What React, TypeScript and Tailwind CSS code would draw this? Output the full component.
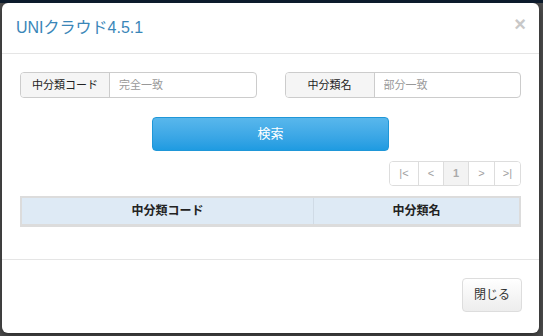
const font = "font-['Liberation_Sans','Noto_Sans_CJK_JP',sans-serif]";

function InputGroup({ label, placeholder }: { label: string; placeholder: string }) {
    return (
        <div className="flex h-[26px] rounded-[4px] border border-[#cccccc] overflow-hidden bg-white">
            <div className="w-[89px] shrink-0 flex items-center justify-center bg-[#f5f5f5] border-r border-[#cccccc] text-[11px] text-[#222]">
                {label}
            </div>
            <input
                className="flex-1 min-w-0 px-[9px] text-[11px] text-[#333] placeholder:text-[#999] outline-none"
                placeholder={placeholder}
            />
        </div>
    );
}

export default function App() {
    const pages = [
        { label: '|<', w: 'w-[28px]' },
        { label: '<', w: 'w-[25px]' },
        { label: '1', w: 'w-[25px]', active: true },
        { label: '>', w: 'w-[26px]' },
        { label: '>|', w: 'w-[26px]' },
    ];

    return (
        <div className={`w-[543px] h-[336px] bg-[#4f4f4f] border-t-[3px] border-[#0c1b2c] overflow-hidden ${font}`}>
            <div className="ml-[2px] w-[537px] h-[330px] bg-white rounded-[6px] shadow-[0_3px_9px_rgba(0,0,0,0.5)] flex flex-col">
                <div className="h-[51px] shrink-0 flex items-center justify-between pl-[14px] pr-[13px] border-b border-[#e5e5e5]">
                    <h4 className="text-[16px] text-[#3a86b8] font-normal">UNIクラウド4.5.1</h4>
                    <span className="text-[20px] leading-none font-bold text-[#c8c8c8] -mt-[9px]">×</span>
                </div>

                <div className="flex-1 px-[18px] pt-[18px] flex flex-col">
                    <div className="grid grid-cols-2 gap-[28px]">
                        <InputGroup label="中分類コード" placeholder="完全一致" />
                        <InputGroup label="中分類名" placeholder="部分一致" />
                    </div>

                    <div className="flex justify-center mt-[19px]">
                        <button
                            type="button"
                            className="w-[237px] h-[34px] rounded-[4px] border border-[#1f97d8] bg-gradient-to-b from-[#58b7ec] to-[#1e9be1] text-white text-[13px]"
                        >
                            検索
                        </button>
                    </div>

                    <div className="flex justify-end mt-[10px]">
                        <div className="flex h-[25px] rounded-[4px] border border-[#dddddd] overflow-hidden">
                            {pages.map((p, i) => (
                                <div
                                    key={p.label}
                                    className={`${p.w} flex items-center justify-center text-[11px] text-[#a0a0a0] ${i > 0 ? 'border-l border-[#dddddd]' : ''} ${p.active ? 'bg-[#f3f3f3] font-bold text-[#aaa]' : 'bg-white'}`}
                                >
                                    {p.label}
                                </div>
                            ))}
                        </div>
                    </div>

                    <div className="mt-[10px] flex h-[31px] border-2 border-b-[3px] border-[#dcdcdc] bg-[#deeaf5] text-[12px] font-bold text-[#222]">
                        <div className="w-[292px] flex items-center justify-center border-r border-[#d0dbe6]">中分類コード</div>
                        <div className="flex-1 flex items-center justify-center">中分類名</div>
                    </div>
                </div>

                <div className="h-[74px] shrink-0 border-t border-[#e5e5e5] flex justify-end items-start pt-[18px] pr-[17px]">
                    <button
                        type="button"
                        className="w-[60px] h-[34px] rounded-[4px] border border-[#dddddd] bg-gradient-to-b from-white to-[#ededed] text-[12px] text-[#333]"
                    >
                        閉じる
                    </button>
                </div>
            </div>
        </div>
    );
}
